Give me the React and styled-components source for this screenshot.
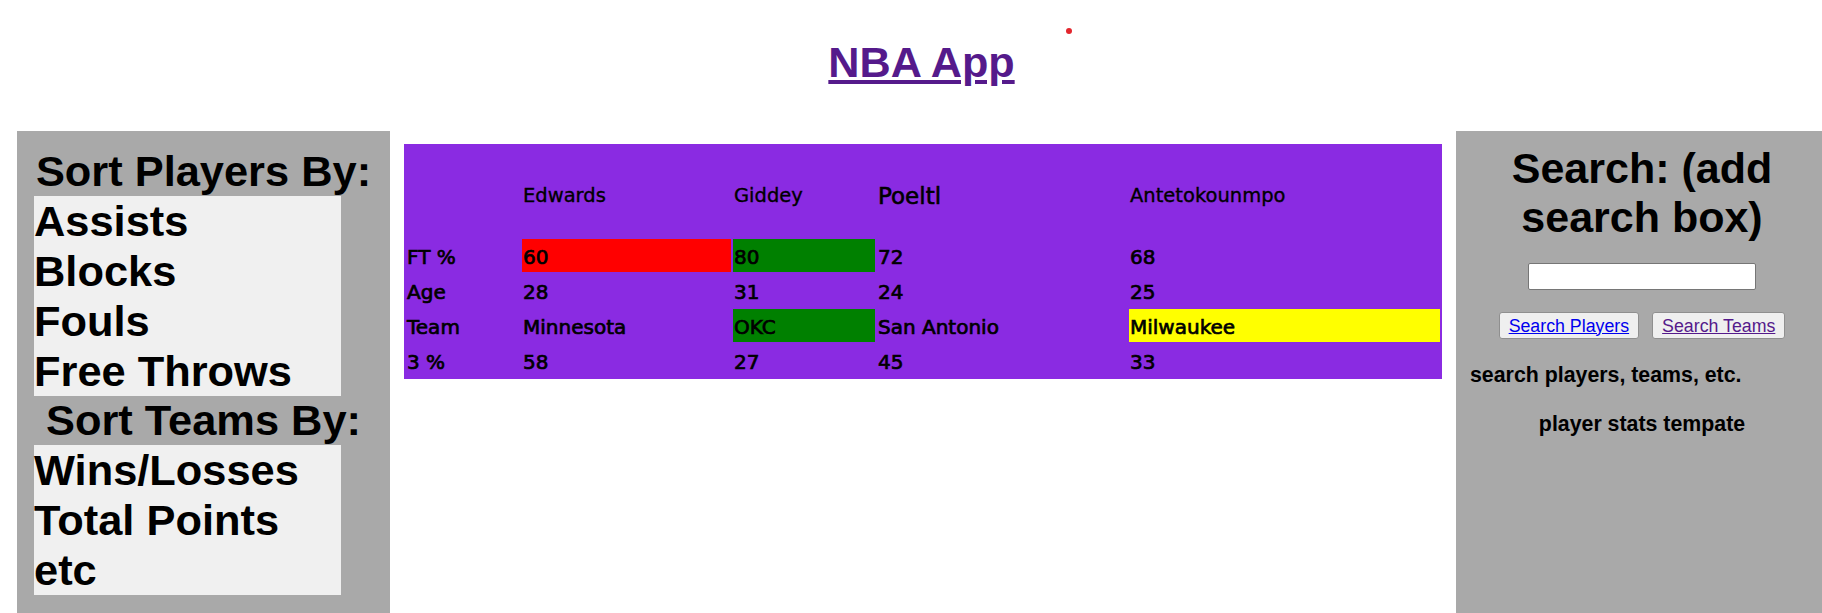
import styled, { createGlobalStyle } from "styled-components";

const GlobalStyle = createGlobalStyle`
  body {
    margin: 0;
    background: #fff;
    font-family: "Liberation Sans", Arial, sans-serif;
    color: #000;
  }
`;

const Page = styled.div`
  height: 100vh;
  overflow: hidden;
`;

const Header = styled.header`
  position: relative;
  height: 131px;
  box-sizing: border-box;
  padding: 38px 0 0 21px;
  text-align: center;
`;

const Title = styled.h1`
  margin: 0;
  font-size: 43.2px;
  line-height: 49px;
  font-weight: bold;

  a {
    color: #551a8b;
    text-decoration: underline;
  }
`;

const Dot = styled.span`
  position: absolute;
  left: 1066px;
  top: 28px;
  width: 6px;
  height: 6px;
  border-radius: 50%;
  background: #e3262d;
`;

const Main = styled.main`
  display: flex;
  align-items: flex-start;
  padding-left: 17px;
`;

const SortPanel = styled.aside`
  width: 373px;
  height: 482px;
  box-sizing: border-box;
  padding: 16px 17px 0;
  background: #a9a9a9;
`;

const SortHeading = styled.h2`
  margin: 0;
  font-size: 43.4px;
  line-height: 49px;
  font-weight: bold;
  text-align: center;
  white-space: nowrap;
`;

const SortList = styled.ul`
  list-style: none;
  margin: 0;
  padding: 0;
  width: 307px;
  background: #f0f0f0;
`;

const SortItem = styled.li`
  font-size: 43.4px;
  line-height: 50px;
  font-weight: bold;
  white-space: nowrap;
`;

const Center = styled.section`
  flex: 1;
  padding: 13px 14px 0;
`;

const StatsTable = styled.table`
  width: 100%;
  table-layout: fixed;
  border-spacing: 2px;
  background: #8a2be2;
  font-family: "Comic Sans MS", "DejaVu Sans", sans-serif;
  font-size: 20px;
`;

const HeadRow = styled.tr`
  height: 91px;
`;

const DataRow = styled.tr`
  height: 33px;
`;

const NameCell = styled.th`
  padding: 8px 1px 0;
  text-align: left;
  font-weight: normal;
  font-size: ${(p) => p.$size || 19.5}px;
  -webkit-text-stroke: ${(p) => (p.$size ? "0.6px" : "0.35px")};
`;

const tones = {
  red: "#ff0000",
  green: "#008000",
  yellow: "#ffff00",
};

const Cell = styled.td`
  padding: 2px 1px 0;
  text-align: left;
  white-space: nowrap;
  background: ${(p) => (p.$tone ? tones[p.$tone] : "transparent")};
  -webkit-text-stroke: 0.7px;
`;

const SearchPanel = styled.aside`
  width: 366px;
  height: 482px;
  box-sizing: border-box;
  padding: 13px 8px 0 14px;
  background: #a9a9a9;
  display: flex;
  flex-direction: column;
  align-items: center;
`;

const SearchHeading = styled.h2`
  margin: 0;
  font-size: 43px;
  line-height: 49px;
  font-weight: bold;
  text-align: center;
`;

const SearchInput = styled.input`
  margin-top: 21px;
  width: 228px;
  height: 27px;
  box-sizing: border-box;
  border: 1px solid #767676;
  border-radius: 2px;
  background: #fff;
`;

const ButtonRow = styled.div`
  display: flex;
  gap: 13px;
  margin-top: 22px;
`;

const SearchButton = styled.button`
  height: 27px;
  box-sizing: border-box;
  padding: 2px 9px;
  border: 1px solid #8f8f8f;
  border-radius: 3px;
  background: #efefef;
  font-family: "Liberation Sans", Arial, sans-serif;
  font-size: 17.78px;
  line-height: 20px;

  a {
    color: ${(p) => (p.$visited ? "#551a8b" : "#0000ee")};
    text-decoration: underline;
  }
`;

const Note = styled.p`
  align-self: stretch;
  margin: 24px 0 0;
  font-size: 21.33px;
  line-height: 24.5px;
  font-weight: bold;
  text-align: ${(p) => (p.$center ? "center" : "left")};
`;

const columns = [114, 209, 142, 250, 311];

const players = [
  { name: "Edwards", ft: 60, ftTone: "red", age: 28, team: "Minnesota", three: 58 },
  { name: "Giddey", ft: 80, ftTone: "green", age: 31, team: "OKC", teamTone: "green", three: 27 },
  { name: "Poeltl", size: 23, ft: 72, age: 24, team: "San Antonio", three: 45 },
  { name: "Antetokounmpo", ft: 68, age: 25, team: "Milwaukee", teamTone: "yellow", three: 33 },
];

const rows = [
  { label: "FT %", key: "ft", tone: "ftTone" },
  { label: "Age", key: "age" },
  { label: "Team", key: "team", tone: "teamTone" },
  { label: "3 %", key: "three" },
];

const App = () => {
  return (
    <Page>
      <GlobalStyle />
      <Header>
        <Title>
          <a href="#">NBA App</a>
        </Title>
        <Dot />
      </Header>
      <Main>
        <SortPanel>
          <SortHeading>Sort Players By:</SortHeading>
          <SortList>
            <SortItem>Assists</SortItem>
            <SortItem>Blocks</SortItem>
            <SortItem>Fouls</SortItem>
            <SortItem>Free Throws</SortItem>
          </SortList>
          <SortHeading>Sort Teams By:</SortHeading>
          <SortList>
            <SortItem>Wins/Losses</SortItem>
            <SortItem>Total Points</SortItem>
            <SortItem>etc</SortItem>
          </SortList>
        </SortPanel>
        <Center>
          <StatsTable>
            <colgroup>
              {columns.map((w, i) => (
                <col key={i} width={w} />
              ))}
            </colgroup>
            <tbody>
              <HeadRow>
                <NameCell />
                {players.map((p) => (
                  <NameCell key={p.name} $size={p.size}>
                    {p.name}
                  </NameCell>
                ))}
              </HeadRow>
              {rows.map((r) => (
                <DataRow key={r.label}>
                  <Cell>{r.label}</Cell>
                  {players.map((p) => (
                    <Cell key={p.name} $tone={r.tone && p[r.tone]}>
                      {p[r.key]}
                    </Cell>
                  ))}
                </DataRow>
              ))}
            </tbody>
          </StatsTable>
        </Center>
        <SearchPanel>
          <SearchHeading>Search: (add search box)</SearchHeading>
          <SearchInput type="text" />
          <ButtonRow>
            <SearchButton>
              <a href="#">Search Players</a>
            </SearchButton>
            <SearchButton $visited>
              <a href="#">Search Teams</a>
            </SearchButton>
          </ButtonRow>
          <Note>search players, teams, etc.</Note>
          <Note $center>player stats tempate</Note>
        </SearchPanel>
      </Main>
    </Page>
  );
};

export default App;
